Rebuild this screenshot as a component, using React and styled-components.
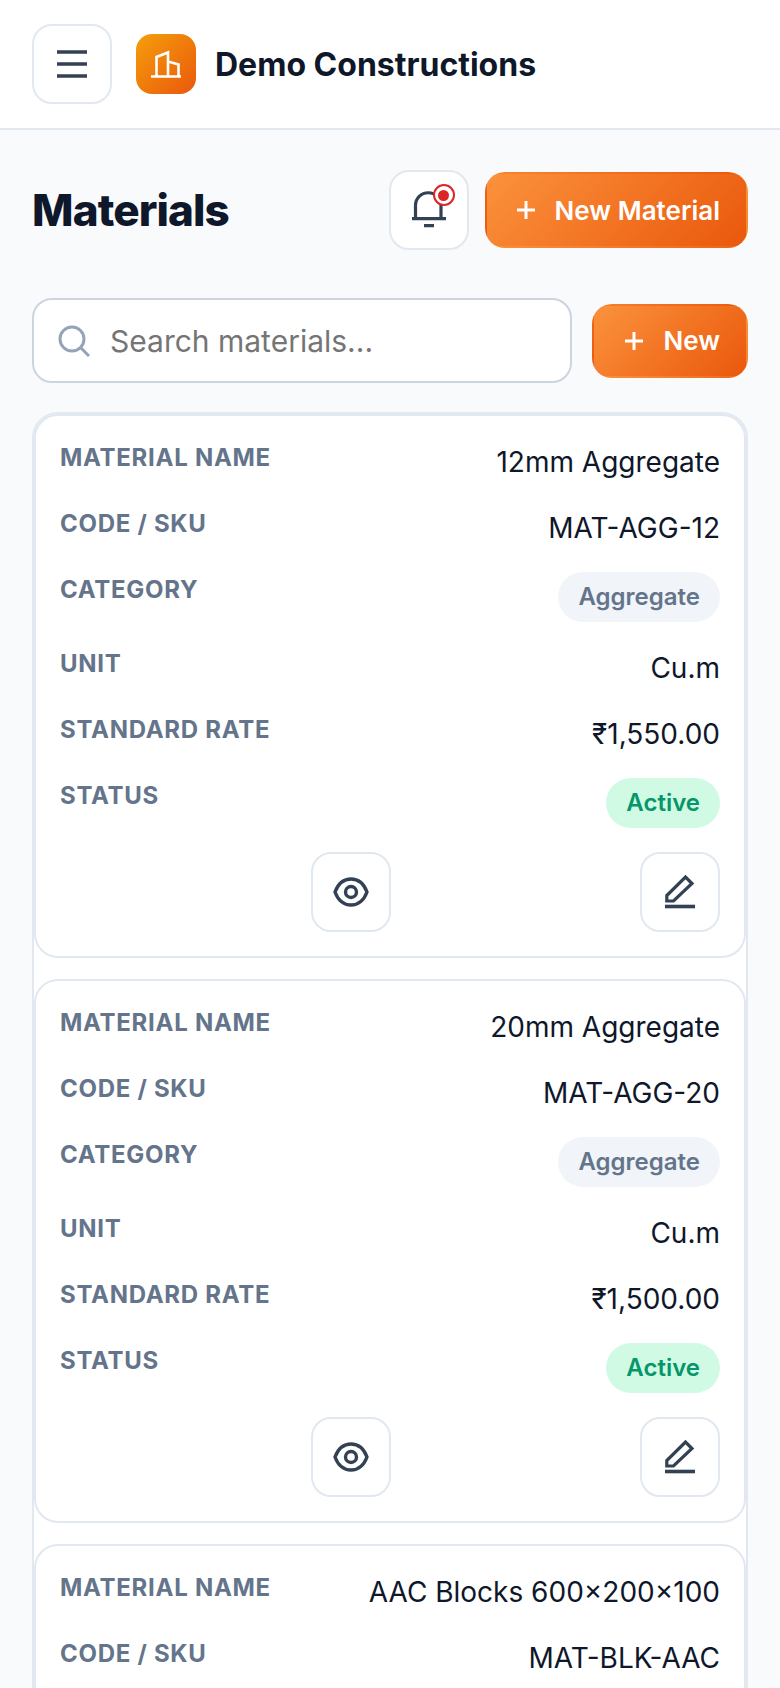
import React from 'react'
import styled, { createGlobalStyle } from 'styled-components'

const GlobalStyle = createGlobalStyle`
  html, body { margin: 0; padding: 0; background: #f8fafc; }
  * { box-sizing: border-box; }
  body { font-family: Inter, "Noto Sans", sans-serif; color: #0f172a; }
`

const Page = styled.div`
  height: 100vh;
  overflow: hidden;
  background: #f8fafc;
`

const TopBar = styled.header`
  display: flex;
  align-items: center;
  height: 130px;
  padding: 0 32px;
  background: #fff;
  border-bottom: 2px solid #e2e8f0;
`

const IconButton = styled.button`
  display: flex;
  align-items: center;
  justify-content: center;
  flex: none;
  width: 80px;
  height: 80px;
  padding: 0;
  position: relative;
  background: #fff;
  border: 2px solid #e2e8f0;
  border-radius: 20px;
  color: #334155;
`

const Logo = styled.div`
  display: flex;
  align-items: center;
  justify-content: center;
  width: 60px;
  height: 60px;
  margin-left: 24px;
  border-radius: 16px;
  background: linear-gradient(135deg, #f59e0b, #ea580c);
`

const Brand = styled.div`
  margin-left: 19px;
  font-size: 32px;
  font-weight: 700;
  color: #0f172a;
`

const Content = styled.main`
  padding: 40px 32px;
`

const PageHead = styled.div`
  display: flex;
  align-items: center;
  gap: 16px;
  margin-bottom: 48px;
`

const Title = styled.h1`
  flex: 1;
  margin: 0;
  font-size: 44px;
  font-weight: 800;
  letter-spacing: -0.88px;
  color: #0f172a;
`

const PrimaryButton = styled.button`
  display: flex;
  align-items: center;
  flex: none;
  gap: 20px;
  height: ${(p) => (p.$tall ? '76px' : '74px')};
  padding: 0 26px 0 ${(p) => (p.$tall ? '30px' : '31px')};
  border: 2px solid transparent;
  border-radius: 20px;
  background: linear-gradient(135deg, #fb923c, #ea580c);
  color: #fff;
  font-family: inherit;
  font-size: 26px;
  font-weight: 600;
`

const Dot = styled.span`
  position: absolute;
  top: 12px;
  right: 12px;
  width: 22px;
  height: 22px;
  border: 2px solid #dc2626;
  border-radius: 50%;
  background: #fff;
  display: flex;
  align-items: center;
  justify-content: center;

  &::after {
    content: '';
    width: 11px;
    height: 11px;
    border-radius: 50%;
    background: #dc2626;
  }
`

const SearchRow = styled.div`
  display: flex;
  align-items: center;
  gap: 20px;
  margin-bottom: 29px;
`

const SearchBox = styled.label`
  flex: 1;
  min-width: 0;
  display: flex;
  align-items: center;
  gap: 20px;
  height: 85px;
  padding: 0 24px;
  background: #fff;
  border: 2px solid #cbd5e1;
  border-radius: 20px;
`

const SearchInput = styled.input`
  flex: 1;
  min-width: 0;
  border: none;
  outline: none;
  padding: 0;
  background: transparent;
  font-family: inherit;
  font-size: 30px;
  color: #0f172a;
`

const TableWrap = styled.section`
  display: flex;
  flex-direction: column;
  gap: 21px;
  background: #fff;
  border: 2px solid #e2e8f0;
  border-radius: 26px;
`

const Card = styled.article`
  display: flex;
  flex-direction: column;
  gap: 24px;
  padding: 25px 24px 24px;
  background: #fff;
  border: 2px solid #e2e8f0;
  border-radius: 24px;
`

const Row = styled.div`
  display: flex;
  justify-content: space-between;
  align-items: flex-start;
`

const Label = styled.span`
  font-size: 24px;
  line-height: 34px;
  font-weight: 700;
  letter-spacing: 0.72px;
  color: #64748b;
`

const Value = styled.span`
  font-size: 28px;
  line-height: 42px;
  color: #0f172a;
`

const Badge = styled.span`
  height: 50px;
  margin: -1px 0 1px;
  padding: 0 20px;
  border-radius: 25px;
  font-size: 24px;
  line-height: 50px;
  font-weight: 600;
  background: ${(p) => (p.$active ? '#d1fae5' : '#f1f5f9')};
  color: ${(p) => (p.$active ? '#059669' : '#64748b')};
`

const Actions = styled.div`
  display: flex;
  justify-content: space-between;
  width: 409px;
  margin: -1px 0 0 auto;
`

const MenuIcon = () => (
  <svg width="30" height="30" viewBox="0 0 30 30" fill="none" stroke="currentColor" strokeWidth="3.4">
    <path d="M0 3h30M0 15h30M0 27h30" />
  </svg>
)

const BuildingIcon = () => (
  <svg width="60" height="60" viewBox="0 0 60 60" fill="none" stroke="#fff" strokeWidth="2.6">
    <path d="M15 42.5h30M20.5 42V23L32 18.5V42.5M32 27.5L42.5 30.5V42.5" />
  </svg>
)

const BellIcon = () => (
  <svg width="40" height="40" viewBox="0 0 40 40" fill="none" stroke="currentColor" strokeWidth="3.2">
    <path d="M3 28.7h34M6.5 28V15.5a12.75 12.75 0 0 1 25.5 0V28M15 35.7h10" />
  </svg>
)

const PlusIcon = () => (
  <svg width="18" height="18" viewBox="0 0 18 18" fill="none" stroke="#fff" strokeWidth="3">
    <path d="M9 0v18M0 9h18" />
  </svg>
)

const SearchIcon = () => (
  <svg width="32" height="32" viewBox="0 0 32 32" fill="none" stroke="#94a3b8" strokeWidth="3">
    <circle cx="14" cy="14" r="12" />
    <path d="M23 23l8 8" />
  </svg>
)

const EyeIcon = () => (
  <svg width="36" height="30" viewBox="0 0 36 30" fill="none" stroke="currentColor" strokeWidth="3.4">
    <path d="M2 15c3-8 8.5-13 16-13s13 5 16 13c-3 8-8.5 13-16 13S5 23 2 15z" />
    <circle cx="18" cy="15" r="5.5" />
  </svg>
)

const PenIcon = () => (
  <svg width="30" height="34" viewBox="0 0 30 34" fill="none" stroke="currentColor" strokeWidth="3.2">
    <path d="M1.8 26V20.5L20.5 2L27 8.5L8.5 26z" />
    <path d="M0 31.5h30" strokeWidth="3.6" />
  </svg>
)

const materials = [
  { name: '12mm Aggregate', code: 'MAT-AGG-12', category: 'Aggregate', unit: 'Cu.m', rate: '₹1,550.00', status: 'Active' },
  { name: '20mm Aggregate', code: 'MAT-AGG-20', category: 'Aggregate', unit: 'Cu.m', rate: '₹1,500.00', status: 'Active' },
  { name: 'AAC Blocks 600×200×100', code: 'MAT-BLK-AAC', category: 'Blocks', unit: 'Nos', rate: '₹65.00', status: 'Active' },
]

const MaterialCard = ({ item }) => (
  <Card>
    <Row><Label>MATERIAL NAME</Label><Value>{item.name}</Value></Row>
    <Row><Label>CODE / SKU</Label><Value>{item.code}</Value></Row>
    <Row><Label>CATEGORY</Label><Badge>{item.category}</Badge></Row>
    <Row><Label>UNIT</Label><Value>{item.unit}</Value></Row>
    <Row><Label>STANDARD RATE</Label><Value>{item.rate}</Value></Row>
    <Row><Label>STATUS</Label><Badge $active>{item.status}</Badge></Row>
    <Actions>
      <IconButton aria-label="View"><EyeIcon /></IconButton>
      <IconButton aria-label="Edit"><PenIcon /></IconButton>
    </Actions>
  </Card>
)

const App = () => {
  return (
    <Page>
      <GlobalStyle />
      <TopBar>
        <IconButton aria-label="Menu"><MenuIcon /></IconButton>
        <Logo><BuildingIcon /></Logo>
        <Brand>Demo Constructions</Brand>
      </TopBar>
      <Content>
        <PageHead>
          <Title>Materials</Title>
          <IconButton aria-label="Notifications"><BellIcon /><Dot /></IconButton>
          <PrimaryButton $tall><PlusIcon />New Material</PrimaryButton>
        </PageHead>
        <SearchRow>
          <SearchBox>
            <SearchIcon />
            <SearchInput placeholder="Search materials..." />
          </SearchBox>
          <PrimaryButton><PlusIcon />New</PrimaryButton>
        </SearchRow>
        <TableWrap>
          {materials.map((item) => <MaterialCard key={item.code} item={item} />)}
        </TableWrap>
      </Content>
    </Page>
  )
}

export default App
